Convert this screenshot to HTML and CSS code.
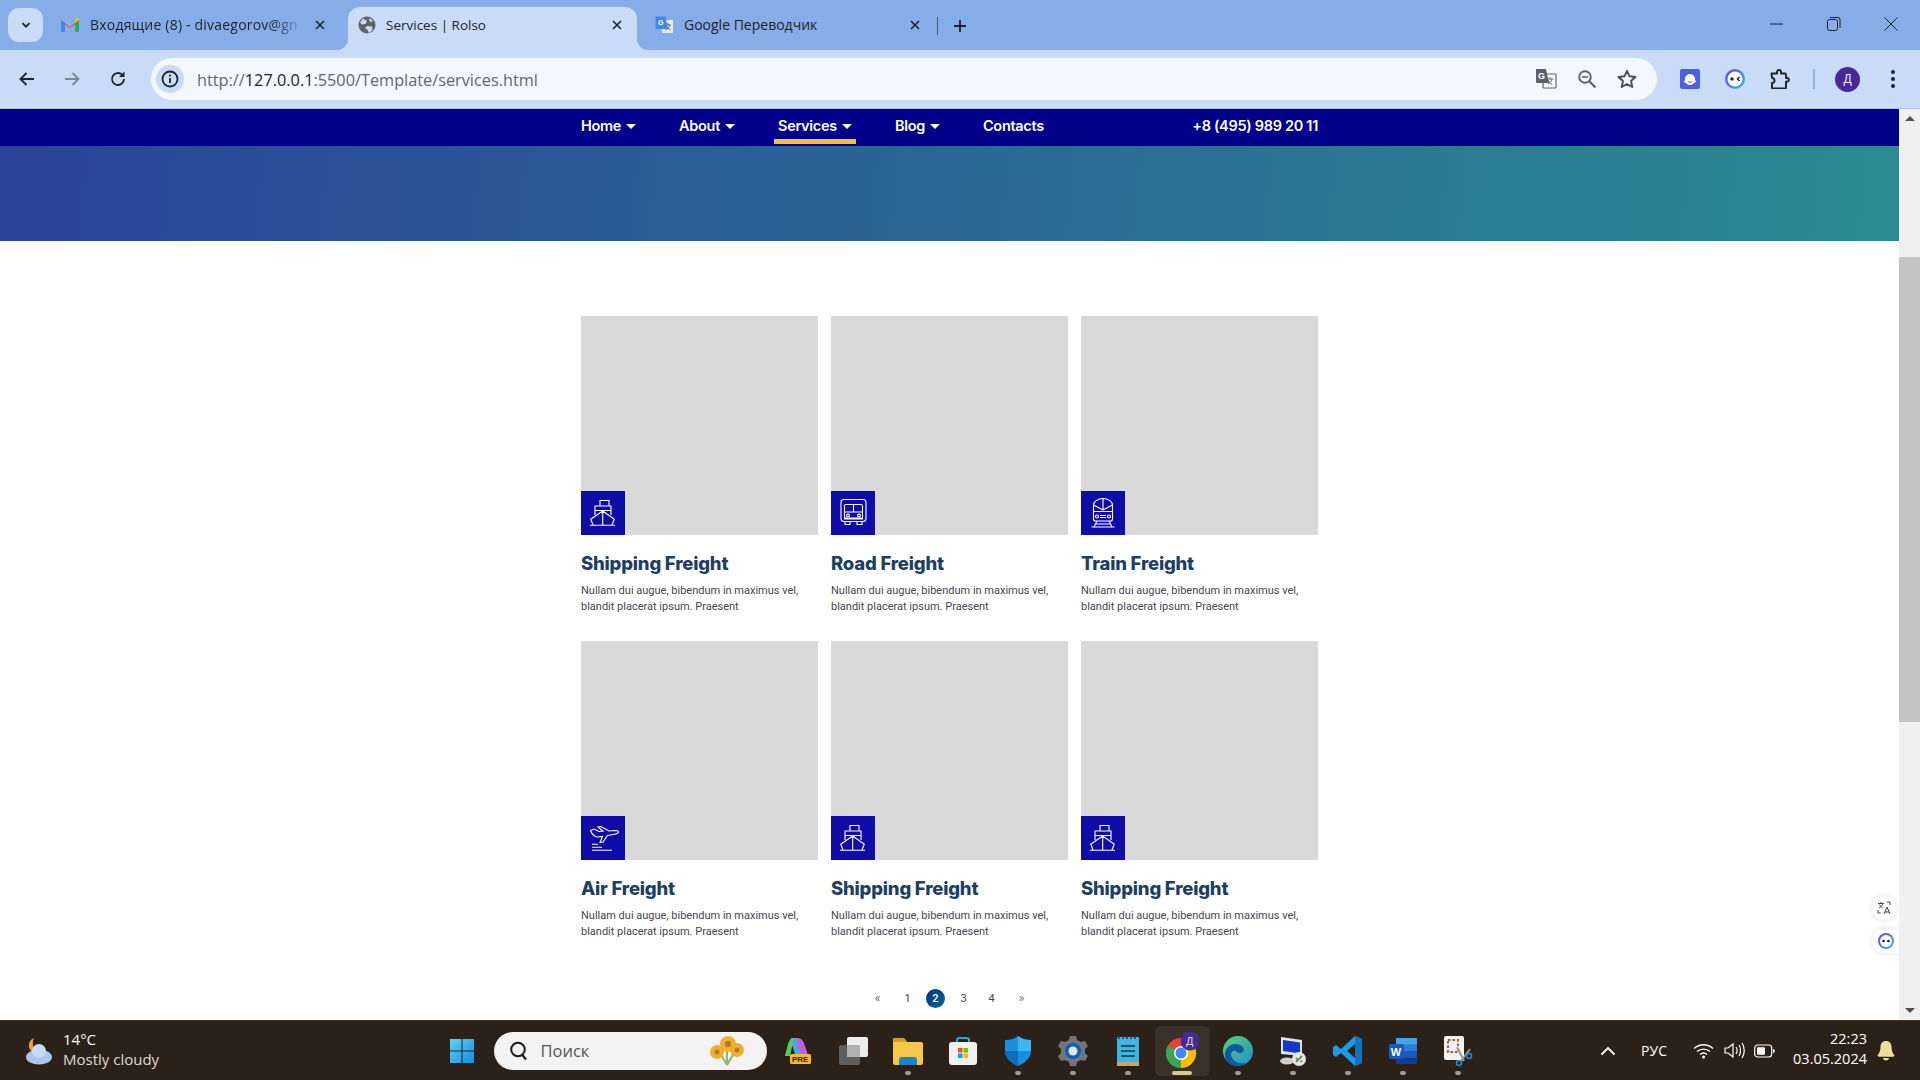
FILE: index.html
```html
<!doctype html>
<html lang="en">
<head>
 <meta charset="UTF-8">
 <title>Services | Rolso</title>
 <link rel="stylesheet" href="styles.css">
</head>
<body>
<svg class="defs" width="0" height="0">
 <symbol id="ship" viewBox="0 0 44 44">
  <g fill="none" stroke="#fff" stroke-width="1.1">
   <path d="M9 34.200H34M12 33.800 9.700 28.300 21.700 20 33.300 28.300 31 33.800M21.700 20V34M14 24V15h16V24M19 15V9.500h9V15M14 19.500h16"/>
  </g>
 </symbol>
 <symbol id="bus" viewBox="0 0 44 44">
  <g fill="none" stroke="#fff" stroke-width="1.1">
   <rect x="10" y="8.500" width="25" height="22" rx="3"/>
   <path d="M13.500 21V15a1.500 1.500 0 0 1 1.500-1.500h15a1.500 1.500 0 0 1 1.500 1.500v6ZM22.500 13.500V21M13.500 21v7h18v-7M14 30.500v3h5v-3M26 30.500v3h5v-3M13.500 27h18"/>
   <circle cx="17" cy="24.500" r="1.400"/><circle cx="28" cy="24.500" r="1.400"/>
  </g>
 </symbol>
 <symbol id="train" viewBox="0 0 44 44">
  <g fill="none" stroke="#fff" stroke-width="1.1">
   <path d="M12.500 28V14c0-3 4-6.500 9.500-6.500S31.500 11 31.500 14v14c0 1.500-1 2-2 2h-15c-1 0-2-.5-2-2ZM12.500 14l9.500 5 9.500-5M22 7.500V19M12.500 20.500h19"/>
   <circle cx="16" cy="25.500" r="1.500"/><circle cx="28" cy="25.500" r="1.500"/>
   <path d="M19 24.500h6M19 26.500h6M16 30l-3 6M28 30l3 6M10.500 36h23M14.500 33h15"/>
  </g>
 </symbol>
 <symbol id="plane" viewBox="0 0 44 44">
  <g fill="none" stroke="#fff" stroke-width="1.1">
   <path d="M9.500 14.500 13 13l5 2.500 4-.5-5-4 3-.5 8 4.500 6-.5c2 0 3.500.8 3.500 1.500s-2 2-5 2.500l-6 1-4.500 6.500-3 .5 2.500-6-5 .5c-3 0-6-3.500-6.500-5.500Z"/>
  </g>
  <path d="M11 28.200h6M11 31.200h10M11 34.200h20" stroke="#fff" stroke-width="1.1"/>
 </symbol>
</svg>

<div class="tabstrip">
 <button class="tab-list"><svg width="12" height="12" viewBox="0 0 12 12"><path d="M2.500 4.200 6 7.700l3.500-3.500" fill="none" stroke="#1f2329" stroke-width="1.800"/></svg></button>
 <div class="tab tab-gmail">
  <svg class="favicon" width="20" height="16" viewBox="0 0 20 16"><path d="M1 15V3l9 7 9-7v12h-4V7.500L10 11 5 7.500V15Z" fill="#ea4335"/><path d="M1 15V3l4 3v9Z" fill="#4285f4"/><path d="M15 15V6l4-3v12Z" fill="#34a853"/><path d="M15 6l4-3V1.500L17 1l-2 1.500Z" fill="#fbbc04"/></svg>
  <span class="tab-title fade">Входящие (8) - divaegorov@gn</span>
  <svg class="tab-x" width="12" height="12" viewBox="0 0 12 12"><path d="M2 2l8 8M10 2l-8 8" stroke="#1f2329" stroke-width="1.600"/></svg>
 </div>
 <div class="tab active">
  <svg class="favicon" width="18" height="18" viewBox="0 0 18 18"><circle cx="9" cy="9" r="8.500" fill="#5f6368"/><path d="M5 2.500 9 5 7.500 8 4 8.500 2 6.500ZM9 10l5 .5.500 3.500-3.500 3-1.500-3L7 12ZM12 2l3 3-2.500 1L11 4Z" fill="#c9dbf6"/></svg>
  <span class="tab-title">Services | Rolso</span>
  <svg class="tab-x" width="12" height="12" viewBox="0 0 12 12"><path d="M2 2l8 8M10 2l-8 8" stroke="#1f2329" stroke-width="1.600"/></svg>
 </div>
 <div class="tab tab-translate">
  <svg class="favicon" width="20" height="20" viewBox="0 0 20 20"><rect x="8" y="5" width="11" height="13" rx="1" fill="#e8eaed"/><path d="M14 8v2M11 10h6M16 10c-.5 2.500-2.500 4-4.500 5M12.500 11c.5 1.500 2 3 4 4" fill="none" stroke="#5f6368"/><path d="M1.500 1.500h10L14 14H2.500a1 1 0 0 1-1-1Z" fill="#4285f4"/><text x="4" y="10" font-size="7" font-weight="700" fill="#fff" font-family="Liberation Sans">G</text></svg>
  <span class="tab-title">Google Переводчик</span>
  <svg class="tab-x" width="12" height="12" viewBox="0 0 12 12"><path d="M2 2l8 8M10 2l-8 8" stroke="#1f2329" stroke-width="1.600"/></svg>
 </div>
 <i class="tab-sep"></i>
 <svg class="new-tab" width="14" height="14" viewBox="0 0 14 14"><path d="M7 1v12M1 7h12" stroke="#1f2329" stroke-width="1.800"/></svg>
 <div class="win-btns">
  <svg width="14" height="14" viewBox="0 0 14 14"><path d="M0 7h13" stroke="#1f2329"/></svg>
  <svg width="14" height="14" viewBox="0 0 14 14"><rect x=".5" y="2.500" width="10" height="11" rx="2" fill="none" stroke="#1f2329"/><path d="M3 .5h8a2 2 0 0 1 2 2V11" fill="none" stroke="#1f2329"/></svg>
  <svg width="14" height="14" viewBox="0 0 14 14"><path d="M.5.5l13 13M13.500.5l-13 13" stroke="#1f2329"/></svg>
 </div>
</div>

<div class="toolbar">
 <svg class="tool back" width="18" height="18" viewBox="0 0 18 18"><path d="M16 9H3M8.500 3 2.500 9l6 6" fill="none" stroke="#1f2329" stroke-width="1.800"/></svg>
 <svg class="tool fwd" width="18" height="18" viewBox="0 0 18 18"><path d="M2 9h13M9.500 3l6 6-6 6" fill="none" stroke="#7b8696" stroke-width="1.800"/></svg>
 <svg class="tool reload" width="18" height="18" viewBox="0 0 18 18"><path d="M15 9a6 6 0 1 1-1.800-4.300" fill="none" stroke="#1f2329" stroke-width="1.800"/><path d="M15.500 1.500v5.500H10Z" fill="#1f2329"/></svg>
 <div class="omnibox">
  <span class="site-info"><svg width="18" height="18" viewBox="0 0 18 18"><circle cx="9" cy="9" r="7.500" fill="none" stroke="#1f2329" stroke-width="1.800"/><path d="M9 8v5" stroke="#1f2329" stroke-width="1.800"/><circle cx="9" cy="5.500" r="1.100" fill="#1f2329"/></svg></span>
  <span class="url">http://<b>127.0.0.1</b>:5500/Template/services.html</span>
  <svg class="omni-icon" width="22" height="22" viewBox="0 0 22 22"><rect x="8" y="6" width="13" height="14" rx="1" fill="#fff" stroke="#5f6368" stroke-width="1.200"/><path d="M1 1h10l3 14H2a1 1 0 0 1-1-1Z" fill="#5f6368"/><text x="3" y="11" font-size="9" font-weight="700" fill="#fff" font-family="Liberation Sans">G</text><path d="M15 9v2M12.500 11h6M17 11c-.5 2.500-2 4-4 5M13.500 12c.5 2 2 3.500 4 5" fill="none" stroke="#5f6368"/></svg>
  <svg class="omni-icon" width="20" height="20" viewBox="0 0 20 20"><circle cx="8" cy="8" r="5.800" fill="none" stroke="#5f6368" stroke-width="1.900"/><path d="M12.500 12.500l6 6" stroke="#5f6368" stroke-width="2.200"/><path d="M5 8h6" stroke="#5f6368" stroke-width="1.600"/></svg>
  <svg class="omni-icon" width="20" height="20" viewBox="0 0 20 20"><path d="M10 1.800l2.500 5.500 6 .7-4.500 4 1.300 6L10 15l-5.300 3 1.300-6-4.500-4 6-.7Z" fill="none" stroke="#4a4f57" stroke-width="1.900" stroke-linejoin="round"/></svg>
 </div>
 <svg class="ext ext-a" width="20" height="20" viewBox="0 0 20 20"><rect width="20" height="20" rx="2" fill="#4d5fe0"/><path d="M5 10a5 5 0 0 1 10 0c0 1 1 2.500 1 3s-1.500 .5-2 1-1.500 2-4 2-3.500-1.500-4-2-2-.5-2-1 1-2 1-3Z" fill="#fff"/><path d="M8 12.500c1 1 3 1 4 0" stroke="#4d5fe0" fill="none"/></svg>
 <svg class="ext ext-b" width="20" height="20" viewBox="0 0 20 20"><defs><linearGradient id="eb" x1="0" y1="0" x2="1" y2="1"><stop offset="0" stop-color="#7c3bd9"/><stop offset="1" stop-color="#21c3e6"/></linearGradient></defs><circle cx="10" cy="10" r="10" fill="url(#eb)"/><circle cx="10" cy="10" r="7.500" fill="#fff"/><circle cx="7" cy="10" r="1.700" fill="#1f2329"/><path d="M14.500 8l-2 2 2 2" fill="none" stroke="#1f2329" stroke-width="1.500"/></svg>
 <svg class="ext ext-c" width="20" height="20" viewBox="0 0 20 20"><path d="M1.500 4H7V2.500a2 2 0 0 1 4 0V4h4a1 1 0 0 1 1 1v3.500h1a1.800 1.800 0 0 1 0 3.600h-1V18a1 1 0 0 1-1 1H3a1 1 0 0 1-1-1v-4.500a2.300 2.300 0 0 0 0-5Z" transform="translate(0 .5)" fill="none" stroke="#1f2329" stroke-width="1.900" stroke-linejoin="round"/></svg>
 <i class="ext-sep"></i>
 <span class="avatar">Д</span>
 <svg class="menu-dots" width="6" height="20" viewBox="0 0 6 20"><circle cx="3" cy="3" r="2" fill="#1f2329"/><circle cx="3" cy="10" r="2" fill="#1f2329"/><circle cx="3" cy="17" r="2" fill="#1f2329"/></svg>
</div>

<div class="viewport">
 <div class="site">
  <nav class="nav">
   <div class="nav-inner">
    <a class="nav-link" href="#">Home<i class="caret"></i></a>
    <a class="nav-link" href="#">About<i class="caret"></i></a>
    <a class="nav-link current" href="#">Services<i class="caret"></i></a>
    <a class="nav-link" href="#">Blog<i class="caret"></i></a>
    <a class="nav-link" href="#">Contacts</a>
    <a class="nav-link phone" href="#">+8 (495) 989 20 11</a>
   </div>
  </nav>
  <div class="banner"></div>
  <section class="services">
   <div class="card-grid">
    <article class="card">
     <div class="card-img"><span class="badge"><svg width="44" height="44"><use href="#ship"/></svg></span></div>
     <h3>Shipping Freight</h3>
     <p>Nullam dui augue, bibendum in maximus vel, blandit placerat ipsum. Praesent</p>
    </article>
    <article class="card">
     <div class="card-img"><span class="badge"><svg width="44" height="44"><use href="#bus"/></svg></span></div>
     <h3>Road Freight</h3>
     <p>Nullam dui augue, bibendum in maximus vel, blandit placerat ipsum. Praesent</p>
    </article>
    <article class="card">
     <div class="card-img"><span class="badge"><svg width="44" height="44"><use href="#train"/></svg></span></div>
     <h3>Train Freight</h3>
     <p>Nullam dui augue, bibendum in maximus vel, blandit placerat ipsum. Praesent</p>
    </article>
    <article class="card">
     <div class="card-img"><span class="badge"><svg width="44" height="44"><use href="#plane"/></svg></span></div>
     <h3>Air Freight</h3>
     <p>Nullam dui augue, bibendum in maximus vel, blandit placerat ipsum. Praesent</p>
    </article>
    <article class="card">
     <div class="card-img"><span class="badge"><svg width="44" height="44"><use href="#ship"/></svg></span></div>
     <h3>Shipping Freight</h3>
     <p>Nullam dui augue, bibendum in maximus vel, blandit placerat ipsum. Praesent</p>
    </article>
    <article class="card">
     <div class="card-img"><span class="badge"><svg width="44" height="44"><use href="#ship"/></svg></span></div>
     <h3>Shipping Freight</h3>
     <p>Nullam dui augue, bibendum in maximus vel, blandit placerat ipsum. Praesent</p>
    </article>
   </div>
   <div class="pager">
    <a class="pager-arrow" href="#">«</a>
    <a href="#">1</a>
    <a class="now" href="#">2</a>
    <a href="#">3</a>
    <a href="#">4</a>
    <a class="pager-arrow" href="#">»</a>
   </div>
  </section>
  <div class="float-btn fb-translate"><svg width="14" height="14" viewBox="0 0 14 14"><path d="M1 2.500h6M4 1v1.500M6 2.500c-.5 2-2 3.500-4 4.500M2.500 3.500c.5 1 1.500 2.500 3 3M7 13l3-7 3 7M8 11h4M10 1h3v3M1 9v3h2.500" fill="none" stroke="#444" stroke-width="1"/></svg></div>
  <div class="float-btn fb-ghost"><svg width="16" height="16" viewBox="0 0 20 20"><circle cx="10" cy="10" r="10" fill="url(#eb)"/><circle cx="10" cy="10" r="7.500" fill="#fff"/><circle cx="7" cy="10" r="1.700" fill="#1f2329"/><circle cx="13" cy="10" r="1.700" fill="#1f2329"/></svg></div>
 </div>
 <div class="scrollbar">
  <i class="arrow-up"></i>
  <div class="thumb"></div>
  <i class="arrow-down"></i>
 </div>
</div>

<div class="taskbar">
 <div class="weather">
  <svg width="30" height="30" viewBox="0 0 30 30"><path d="M16 1c-5 2-7 8-3 13 3 2 6 2 8 1-5 0-8-8-5-14Z" fill="#f0a030" transform="translate(-6 1)"/><ellipse cx="15" cy="21" rx="13" ry="7.500" fill="#a9c6ee"/><circle cx="15" cy="15" r="7" fill="#c5daf5"/></svg>
  <div class="weather-text"><span class="temp">14°C</span><span>Mostly cloudy</span></div>
 </div>
 <div class="task-icon"><svg width="26" height="26" viewBox="0 0 26 26"><defs><linearGradient id="win" x1="0" y1="0" x2="1" y2="1"><stop offset="0" stop-color="#5fd4f7"/><stop offset="1" stop-color="#0f8ce0"/></linearGradient></defs><path d="M1 1h11.500v11.500H1ZM13.500 1H25v11.500H13.500ZM1 13.500h11.500V25H1ZM13.500 13.500H25V25H13.500Z" fill="url(#win)"/></svg></div>
 <div class="search">
  <svg width="20" height="20" viewBox="0 0 20 20"><circle cx="9" cy="8.500" r="6.800" fill="none" stroke="#1b1b1b" stroke-width="2"/><path d="M13 13.500l4 5" stroke="#1b1b1b" stroke-width="2.200"/></svg>
  <span>Поиск</span>
  <svg class="flowers" width="38" height="32" viewBox="0 0 38 32"><path d="M19 30 12 18M19 30l8-14M19 30V12" stroke="#8fb56a" stroke-width="2"/><g fill="#eeb030"><circle cx="9" cy="17" r="7"/><circle cx="20" cy="9" r="8"/><circle cx="29" cy="15" r="7"/></g><g fill="#b5791a"><circle cx="9" cy="17" r="2.500"/><circle cx="20" cy="9" r="3"/><circle cx="29" cy="15" r="2.500"/></g></svg>
 </div>
 <div class="task-icons">
  <div class="task-icon"><svg width="30" height="30" viewBox="0 0 30 30"><path d="M8 2h6l6 16h-8L9 9l-3 11H2Z" fill="#46a8e8"/><path d="M14 2c4 0 6 2 8 8l3 9h-7L14 8Z" fill="#c35ee0"/><path d="M5 8c1-4 3-6 6-6L7 20H2Z" fill="#5ac85a"/><rect x="7" y="18" width="21" height="10" rx="1.500" fill="#f2bb30"/><text x="9" y="26.300" font-size="8" font-weight="700" fill="#2a2016" font-family="Liberation Sans">PRE</text></svg></div>
  <div class="task-icon"><svg width="30" height="30" viewBox="0 0 30 30"><rect x="1" y="9" width="21" height="20" rx="2" fill="#5e5e5e"/><rect x="9" y="1" width="21" height="20" rx="2" fill="#ececec"/><rect x="9" y="9" width="13" height="12" fill="#b0b0b0"/></svg></div>
  <div class="task-icon run"><svg width="30" height="30" viewBox="0 0 30 30"><path d="M0 4a2 2 0 0 1 2-2h9l3 4h14a2 2 0 0 1 2 2v19a2 2 0 0 1-2 2H2a2 2 0 0 1-2-2Z" fill="#f5c84a"/><path d="M0 4a2 2 0 0 1 2-2h9l3 4H0Z" fill="#d89c20"/><path d="M6 29v-5a3 3 0 0 1 3-3h12a3 3 0 0 1 3 3v5Z" fill="#1f80d0"/></svg></div>
  <div class="task-icon"><svg width="30" height="30" viewBox="0 0 30 30"><path d="M9 7V4a2 2 0 0 1 2-2h8a2 2 0 0 1 2 2v3" fill="none" stroke="#2aa8e0" stroke-width="2"/><rect x="1" y="6" width="28" height="23" rx="3" fill="#f0f0f0"/><rect x="10" y="12" width="4.500" height="4.500" fill="#f25022"/><rect x="15.500" y="12" width="4.500" height="4.500" fill="#7fba00"/><rect x="10" y="17.500" width="4.500" height="4.500" fill="#00a4ef"/><rect x="15.500" y="17.500" width="4.500" height="4.500" fill="#ffb900"/></svg></div>
  <div class="task-icon run"><svg width="30" height="30" viewBox="0 0 30 30"><path d="M15 0c4 3 8 4 13 4v11c0 7-6 12-13 15C8 27 2 22 2 15V4c5 0 9-1 13-4Z" fill="#1a8fe0"/><path d="M15 0c4 3 8 4 13 4v11H15Z" fill="#3cb8f0"/><path d="M15 15H2c0 7 6 12 13 15Z" fill="#0d6cc0"/></svg></div>
  <div class="task-icon run"><svg width="30" height="30" viewBox="0 0 30 30"><path d="M12 0h6l1 4 4 2 4-1 3 5-3 3v4l3 3-3 5-4-1-4 2-1 4h-6l-1-4-4-2-4 1-3-5 3-3v-4L0 10l3-5 4 1 4-2Z" fill="#6f7680"/><circle cx="15" cy="15" r="8" fill="#0f5fb0"/><circle cx="15" cy="15" r="4.500" fill="#dfe6ee"/></svg></div>
  <div class="task-icon run"><svg width="24" height="32" viewBox="0 0 24 32"><rect x="1" y="2" width="22" height="28" rx="1" fill="#3fb4dc"/><rect x="1" y="27" width="22" height="4" fill="#c9a070"/><path d="M5 11h14M5 16h14M5 21h14" stroke="#0f5a78" stroke-width="2"/><path d="M3 1v3M7 1v3M11 1v3M15 1v3M19 1v3" stroke="#145" stroke-width="1.500"/></svg></div>
  <div class="task-icon chrome run-wide"><svg width="34" height="38" viewBox="0 0 34 38"><circle cx="15" cy="21" r="15" fill="#ea4335"/><path d="M15 21 2 28.500A15 15 0 0 0 15 36Z" fill="#34a853"/><path d="M2 13.500A15 15 0 0 0 2 28.500L15 21Z" fill="#34a853"/><path d="M28 13.500A15 15 0 0 1 15 36L15 21Z" fill="#fbbc04"/><circle cx="15" cy="21" r="7" fill="#fff"/><circle cx="15" cy="21" r="5.500" fill="#4285f4"/><circle cx="24" cy="9" r="9.500" fill="#47289a"/><text x="20" y="13" font-size="11" fill="#ddd" font-family="Liberation Sans">Д</text></svg></div>
  <div class="task-icon run"><svg width="30" height="30" viewBox="0 0 30 30"><defs><linearGradient id="edg" x1="0" y1="0" x2="1" y2="1"><stop offset="0" stop-color="#5ed36a"/><stop offset="1" stop-color="#1a8fd8"/></linearGradient></defs><circle cx="15" cy="15" r="15" fill="url(#edg)"/><path d="M2 19C2 10 10 6 17 9c5 2 5 8 0 8-4 0-3-3-7-2-4 2-2 10 6 12 3 1 6 0 8-1-3 3-7 4-10 4C8 30 2 26 2 19Z" fill="#0c59a4"/></svg></div>
  <div class="task-icon run"><svg width="30" height="30" viewBox="0 0 30 30"><path d="M3 1l21 3v16L3 18Z" fill="#dfe3ea"/><path d="M5 4l17 2.500v11L5 15Z" fill="#1638c8"/><ellipse cx="9" cy="25" rx="7" ry="3.500" fill="#cfcfcf"/><circle cx="21" cy="23" r="7" fill="#e4e4e4"/><path d="M18 26l6-6M18 22l1.500 1.500M24 26l-1.500-1.500" stroke="#2f8f3a" stroke-width="1.500"/></svg></div>
  <div class="task-icon run"><svg width="30" height="30" viewBox="0 0 30 30"><path d="M22 0l7 3v24l-7 3L8 17l-5 4-3-2v-8l3-2 5 4Z" fill="#1e9ae6"/><path d="M22 0l7 3v24l-7 3Z" fill="#0f75c0"/><path d="M22 8l-8 7 8 7Z" fill="#2a2016"/></svg></div>
  <div class="task-icon run"><svg width="30" height="30" viewBox="0 0 30 30"><rect x="8" y="2" width="21" height="26" rx="1.500" fill="#2b7cd3"/><rect x="8" y="2" width="21" height="6.500" fill="#41a5ee"/><rect x="8" y="15" width="21" height="6.500" fill="#185abd"/><rect x="8" y="21.500" width="21" height="6.500" fill="#103f91"/><rect x="1" y="8" width="15" height="15" rx="1.500" fill="#185abd"/><text x="2.800" y="19.500" font-size="11" font-weight="700" fill="#fff" font-family="Liberation Sans">W</text></svg></div>
  <div class="task-icon run"><svg width="30" height="32" viewBox="0 0 30 32"><rect x="1" y="1" width="20" height="24" rx="2" fill="#f2f2f2"/><rect x="5" y="5" width="10" height="12" fill="none" stroke="#d04a30" stroke-width="2" stroke-dasharray="2.500 2"/><path d="M14 12l7 14M27 14l-9 12" stroke="#9a9a9a" stroke-width="2"/><circle cx="16" cy="28" r="2.500" fill="none" stroke="#1d8fd0" stroke-width="1.500"/><circle cx="26" cy="21" r="2.500" fill="none" stroke="#1d8fd0" stroke-width="1.500"/></svg></div>
 </div>
 <div class="tray">
  <svg class="tray-chev" width="16" height="10" viewBox="0 0 16 10"><path d="M1.500 8.500 8 2l6.500 6.500" fill="none" stroke="#fff" stroke-width="1.800"/></svg>
  <span class="lang">РУС</span>
  <svg class="tray-wifi" width="21" height="16" viewBox="0 0 21 16"><path d="M1 5.500c5.500-5 13.500-5 19 0M4 8.500c3.800-3.300 9.200-3.300 13 0M7 11.500c2-1.700 5-1.700 7 0" fill="none" stroke="#fff" stroke-width="1.300"/><circle cx="10.500" cy="14" r="1.500" fill="#fff"/></svg>
  <svg class="tray-vol" width="21" height="17" viewBox="0 0 21 17"><path d="M1 6v5h3l5 4V2L4 6Z" fill="none" stroke="#fff" stroke-width="1.200"/><path d="M12 5c1.300 2 1.300 5 0 7M15 3c2 3 2 8 0 11M18 1c3 4 3 11 0 15" fill="none" stroke="#fff" stroke-width="1.200"/></svg>
  <svg class="tray-bat" width="21" height="14" viewBox="0 0 21 14"><rect x=".7" y="1" width="17" height="12" rx="3" fill="none" stroke="#fff" stroke-width="1.200"/><rect x="3" y="3.200" width="8" height="7.600" rx="1" fill="#fff"/><path d="M19 5v4c1.300 0 1.800-1 1.800-2s-.5-2-1.800-2Z" fill="#fff"/></svg>
  <div class="clock"><span>22:23</span><span>03.05.2024</span></div>
  <svg class="bell" width="18" height="20" viewBox="0 0 18 20"><path d="M9 0c3.500 0 5.500 2.500 5.500 6 0 4 1.500 6.500 3 8.500 0 1-1 1.200-2 1.200h-13c-1 0-2-.2-2-1.200C2 12.500 3.500 10 3.500 6 3.500 2.500 5.500 0 9 0Z" fill="#eedd98"/><path d="M6 17h6c0 1.500-1.300 2.500-3 2.500S6 18.500 6 17Z" fill="#eedd98"/></svg>
 </div>
</div>
</body>
</html>
```

FILE: styles.css
```css
*{
 margin:0;
 padding:0;
 box-sizing:border-box;
}
html,body{
 width:1920px;
 height:1080px;
 overflow:hidden;
}
body{
 display:flex;
 flex-direction:column;
 font-family:"Open Sans","Liberation Sans",sans-serif;
 background:#fff;
}
a{
 text-decoration:none;
 color:inherit;
}
.defs{
 position:absolute;
}

/* browser tabs */
.tabstrip{
 display:flex;
 align-items:flex-end;
 height:50px;
 padding-left:8px;
 background:#87ade9;
 flex:none;
}
.tab-list{
 display:flex;
 align-items:center;
 justify-content:center;
 width:35px;
 height:34px;
 margin-bottom:8px;
 margin-right:5px;
 border:0;
 border-radius:11px;
 background:#c9dbf6;
}
.tab{
 position:relative;
 display:flex;
 align-items:center;
 gap:10px;
 width:300px;
 height:43px;
 padding:0 14px 8px 12px;
 font-size:14px;
 color:#1f2329;
}
.tab-gmail{
 width:300px;
 padding-left:12px;
 padding-right:22px;
}
.tab-gmail .tab-title{
 letter-spacing:.2px;
}
.tab.active{
 width:289px;
 padding-left:10px;
 background:#c9dbf6;
 border-radius:12px 12px 0 0;
}
.tab.active::before,.tab.active::after{
 content:'';
 position:absolute;
 bottom:0;
 width:12px;
 height:12px;
}
.tab.active::before{
 left:-12px;
 background:radial-gradient(circle at 0 0,transparent 12px,#c9dbf6 12.500px);
}
.tab.active::after{
 right:-12px;
 background:radial-gradient(circle at 100% 0,transparent 12px,#c9dbf6 12.500px);
}
.tab-translate{
 width:300px;
 padding-left:17px;
 padding-right:16px;
}
.favicon{
 flex:none;
}
.tab-title{
 flex:1;
 overflow:hidden;
 white-space:nowrap;
}
.tab-title.fade{
 -webkit-mask-image:linear-gradient(90deg,#000 85%,transparent);
}
.tab.active .tab-title{
 font-size:13.500px;
}
.tab-x{
 flex:none;
}
.tab-sep{
 width:1px;
 height:18px;
 margin:0 0 15px 0;
 background:#3e5a85;
}
.new-tab{
 margin:0 0 17px 15px;
}
.win-btns{
 display:flex;
 gap:43px;
 margin-left:auto;
 margin-right:22px;
 align-self:flex-start;
 margin-top:17px;
}

/* browser toolbar */
.toolbar{
 display:flex;
 align-items:center;
 height:59px;
 background:#c9dbf6;
 border-bottom:1px solid #a9bfe6;
 flex:none;
}
.tool{
 flex:none;
}
.back{
 margin-left:18px;
}
.fwd{
 margin-left:27px;
}
.reload{
 margin-left:28px;
}
.omnibox{
 display:flex;
 align-items:center;
 width:1506px;
 height:42px;
 margin-left:24px;
 padding:0 20px 0 5px;
 border-radius:21px;
 background:#f4f8fd;
}
.site-info{
 display:flex;
 align-items:center;
 justify-content:center;
 width:28px;
 height:28px;
 border-radius:50%;
 background:#c9dbf6;
}
.url{
 flex:1;
 margin-left:13px;
 padding-top:1px;
 font-size:16.300px;
 color:#606770;
}
.url b{
 font-weight:400;
 color:#1f2329;
}
.omni-icon{
 margin-left:20px;
 flex:none;
}
.ext{
 flex:none;
}
.ext-a{
 margin-left:23px;
}
.ext-b,.ext-c{
 margin-left:25px;
}
.ext-sep{
 width:2px;
 height:20px;
 margin-left:23px;
 background:#8fb0e0;
}
.avatar{
 display:flex;
 align-items:center;
 justify-content:center;
 width:25px;
 height:25px;
 margin-left:20px;
 border-radius:50%;
 background:#47289a;
 color:#eee;
 font-size:12px;
 font-family:"Liberation Sans",sans-serif;
}
.menu-dots{
 margin-left:30px;
}

/* page */
.viewport{
 display:flex;
 flex:1;
 min-height:0;
}
.site{
 position:relative;
 flex:1;
 overflow:hidden;
}
.nav{
 height:37px;
 background:#00008b;
}
.nav-inner{
 display:flex;
 width:737px;
 margin:0 auto;
 gap:35px;
}
.nav-link{
 display:flex;
 align-items:center;
 gap:5px;
 height:35px;
 padding:3px 4px 0;
 border-bottom:5px solid transparent;
 font-family:"Inter","Liberation Sans",sans-serif;
 font-size:14.500px;
 font-weight:600;
 letter-spacing:-.3px;
 color:#fff;
}
.nav-link:first-child{
 margin-left:-4px;
}
.nav-link.current{
 border-bottom-color:#ffbe2e;
}
.phone{
 margin-left:auto;
 margin-right:-4px;
}
.caret{
 width:0;
 height:0;
 margin-top:2px;
 border-left:5px solid transparent;
 border-right:5px solid transparent;
 border-top:5px solid #fff;
}
.banner{
 height:95px;
 background:linear-gradient(97deg,#2b4398,#2a8c92);
}
.services{
 width:737px;
 margin:0 auto;
 padding-top:75px;
}
.card-grid{
 display:grid;
 grid-template-columns:repeat(3,237px);
 column-gap:13px;
 row-gap:26px;
}
.card-img{
 position:relative;
 height:219px;
 background:#d9d9d9;
}
.badge{
 position:absolute;
 left:0;
 bottom:0;
 display:block;
 width:44px;
 height:44px;
 background:#100ca8;
}
.badge svg{
 display:block;
}
.card h3{
 margin-top:14px;
 font-family:"Inter","Liberation Sans",sans-serif;
 font-size:18.500px;
 line-height:28px;
 font-weight:800;
 letter-spacing:-.2px;
 color:#1c3f63;
}
.card p{
 margin-top:6px;
 font-family:"Roboto","Liberation Sans",sans-serif;
 font-size:11px;
 line-height:16px;
 color:#45454f;
}
.pager{
 display:flex;
 justify-content:center;
 gap:9px;
 margin-top:49px;
 font-family:"Roboto","Liberation Sans",sans-serif;
 font-size:11px;
 color:#45454f;
}
.pager a{
 width:19px;
 height:19px;
 line-height:19px;
 text-align:center;
 border-radius:50%;
}
.pager .pager-arrow{
 margin:0 2px;
 font-size:13px;
 line-height:17px;
 color:#777;
}
.pager .now{
 background:linear-gradient(135deg,#00307f,#0a6a92);
 color:#fff;
 font-weight:500;
}
.float-btn{
 position:absolute;
 display:flex;
 align-items:center;
 justify-content:center;
 width:24px;
 height:24px;
 background:#fff;
 box-shadow:0 0 6px rgba(0,0,0,.12);
}
.fb-translate{
 right:3px;
 top:787px;
 border-radius:50%;
}
.fb-ghost{
 right:0;
 top:820px;
 width:27px;
 border-radius:12px 0 0 12px;
}

/* scrollbar */
.scrollbar{
 display:flex;
 flex-direction:column;
 align-items:center;
 width:21px;
 background:#f0f0f0;
 flex:none;
}
.arrow-up,.arrow-down{
 width:0;
 height:0;
 border-left:5px solid transparent;
 border-right:5px solid transparent;
}
.arrow-up{
 margin-top:7px;
 border-bottom:5px solid #505050;
}
.arrow-down{
 margin-top:auto;
 margin-bottom:7px;
 border-top:5px solid #505050;
}
.thumb{
 width:100%;
 height:465px;
 margin-top:136px;
 background:#c4c4c4;
}

/* windows taskbar */
.taskbar{
 display:flex;
 align-items:center;
 height:60px;
 background:#2c2118;
 border-top:1px solid #3d342b;
 color:#fff;
 flex:none;
}
.weather{
 display:flex;
 align-items:center;
 width:434.500px;
 padding-left:24px;
 gap:9px;
}
.weather-text{
 display:flex;
 flex-direction:column;
 padding-bottom:4px;
 font-size:15px;
 line-height:20px;
 color:#ded9d3;
}
.temp{
 color:#fff;
}
.task-icon{
 position:relative;
 display:flex;
 align-items:center;
 justify-content:center;
 width:55px;
 height:50px;
 flex:none;
}
.task-icon.run::after{
 content:'';
 position:absolute;
 bottom:1px;
 left:24.500px;
 width:6px;
 height:4px;
 border-radius:2px;
 background:#9b9b9b;
}
.chrome{
 border-radius:6px;
 background:#3a3128;
}
.chrome::after{
 content:'';
 position:absolute;
 bottom:1px;
 left:17px;
 width:20px;
 height:4px;
 border-radius:2px;
 background:#d9c98c;
}
.search{
 display:flex;
 align-items:center;
 width:273px;
 height:38px;
 margin-left:4px;
 padding:0 21px 0 15px;
 border-radius:19px;
 background:#f3f3f3;
 color:#555;
 font-size:16.500px;
 gap:12px;
 flex:none;
}
.flowers{
 margin-left:auto;
}
.task-icons{
 display:flex;
 margin-left:3.500px;
}
.tray{
 display:flex;
 align-items:center;
 margin-left:auto;
 padding-right:25px;
}
.lang{
 margin-left:25px;
 font-size:14px;
}
.tray-wifi{
 margin-left:26px;
}
.tray-vol{
 margin-left:10px;
}
.tray-bat{
 margin-left:9px;
}
.clock{
 display:flex;
 flex-direction:column;
 align-items:flex-end;
 width:92px;
 padding-bottom:3px;
 font-size:14.500px;
 line-height:20px;
}
.bell{
 margin-left:10px;
}
```
